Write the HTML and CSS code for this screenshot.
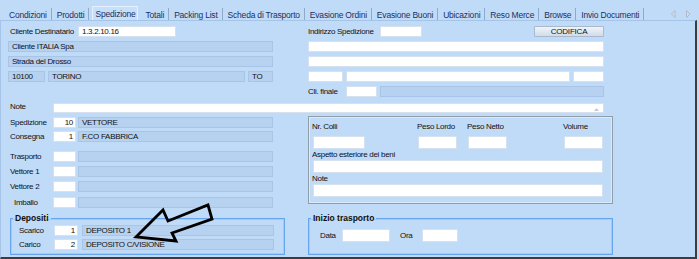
FILE: index.html
```html
<!DOCTYPE html>
<html>
<head>
    <title>Spedizione</title>
    <link rel="stylesheet" href="styles.css">
</head>
<body>
    <div class="window">
        <div class="tabbar">
            <span class="tab">Condizioni</span>
            <span class="tab">Prodotti</span>
            <span class="tab active">Spedizione</span>
            <span class="tab">Totali</span>
            <span class="tab">Packing List</span>
            <span class="tab">Scheda di Trasporto</span>
            <span class="tab">Evasione Ordini</span>
            <span class="tab">Evasione Buoni</span>
            <span class="tab">Ubicazioni</span>
            <span class="tab">Reso Merce</span>
            <span class="tab">Browse</span>
            <span class="tab">Invio Documenti</span>
            <span class="tab-scroll">
                <svg width="20" height="8" viewBox="0 0 20 8">
                    <path d="M4 0.5 L0.5 4 L4 7.5 Z" fill="#d3dde9" stroke="#aebbcc"/>
                    <path d="M15.5 0.5 L19 4 L15.5 7.5 Z" fill="#d3dde9" stroke="#aebbcc"/>
                </svg>
            </span>
        </div>

        <div class="pane">
            <!-- intestazione destinatario / indirizzo -->
            <div class="section top">
                <div class="col left">
                    <div class="row">
                        <label class="lbl lbl-dest">Cliente Destinatario</label>
                        <div class="box in w98">1.3.2.10.16</div>
                    </div>
                    <div class="row gap4">
                        <div class="box ro full">Cliente ITALIA Spa</div>
                    </div>
                    <div class="row gap4">
                        <div class="box ro full">Strada del Drosso</div>
                    </div>
                    <div class="row gap4">
                        <div class="box ro w37">10100</div>
                        <div class="box ro w197 sp3">TORINO</div>
                        <div class="box ro w25 sp3">TO</div>
                    </div>
                </div>
                <div class="col right">
                    <div class="row">
                        <label class="lbl lbl-ind">Indirizzo Spedizione</label>
                        <div class="box in w42"></div>
                        <button class="btn" type="button">CODIFICA</button>
                    </div>
                    <div class="row gap4">
                        <div class="box in full"></div>
                    </div>
                    <div class="row gap4">
                        <div class="box in full"></div>
                    </div>
                    <div class="row gap4">
                        <div class="box in w35"></div>
                        <div class="box in w224 sp3"></div>
                        <div class="box in w31 sp3"></div>
                    </div>
                    <div class="row gap4">
                        <label class="lbl lbl-cli">Cli. finale</label>
                        <div class="box in w31"></div>
                        <div class="box ro w224 sp3"></div>
                    </div>
                </div>
            </div>

            <div class="row note-row">
                <label class="lbl lbl-note">Note</label>
                <div class="box in memo">
                    <svg class="memo-arrow" width="5" height="3" viewBox="0 0 5 3"><path d="M0 3 L2.5 0 L5 3 Z" fill="#c4c9cf"/></svg>
                </div>
            </div>

            <!-- vettori e colli -->
            <div class="section middle">
                <div class="col left">
                    <div class="row">
                        <label class="lbl lbl-side">Spedizione</label>
                        <div class="box in code num">10</div>
                        <div class="box ro desc">VETTORE</div>
                    </div>
                    <div class="row gap3">
                        <label class="lbl lbl-side">Consegna</label>
                        <div class="box in code num">1</div>
                        <div class="box ro desc">F.CO FABBRICA</div>
                    </div>
                    <div class="row gap9">
                        <label class="lbl lbl-side">Trasporto</label>
                        <div class="box in code"></div>
                        <div class="box ro desc"></div>
                    </div>
                    <div class="row gap4">
                        <label class="lbl lbl-side">Vettore 1</label>
                        <div class="box in code"></div>
                        <div class="box ro desc"></div>
                    </div>
                    <div class="row gap4">
                        <label class="lbl lbl-side">Vettore 2</label>
                        <div class="box in code"></div>
                        <div class="box ro desc"></div>
                    </div>
                    <div class="row gap5">
                        <label class="lbl lbl-side lbl-imb">Imballo</label>
                        <div class="box in code"></div>
                        <div class="box ro desc"></div>
                    </div>
                </div>
                <div class="col right">
                    <div class="colli">
                        <div class="colli-grid">
                            <span>Nr. Colli</span>
                            <span>Peso Lordo</span>
                            <span>Peso Netto</span>
                            <span>Volume</span>
                            <div class="box in tall w52"></div>
                            <div class="box in tall w39"></div>
                            <div class="box in tall w39"></div>
                            <div class="box in tall w39"></div>
                        </div>
                        <div class="colli-lbl">Aspetto esteriore dei beni</div>
                        <div class="box in tall wide"></div>
                        <div class="colli-lbl">Note</div>
                        <div class="box in tall wide"></div>
                    </div>
                </div>
            </div>

            <!-- depositi / inizio trasporto -->
            <div class="section groups">
                <fieldset class="group depositi">
                    <legend>Depositi</legend>
                    <div class="row">
                        <label class="lbl lbl-dep">Scarico</label>
                        <div class="box in dep-code num">1</div>
                        <div class="box ro dep-desc">DEPOSITO 1</div>
                    </div>
                    <div class="row gap3">
                        <label class="lbl lbl-dep">Carico</label>
                        <div class="box in dep-code num">2</div>
                        <div class="box ro dep-desc">DEPOSITO C/VISIONE</div>
                    </div>
                </fieldset>
                <fieldset class="group inizio">
                    <legend>Inizio trasporto</legend>
                    <div class="row">
                        <label class="lbl lbl-data">Data</label>
                        <div class="box in tall w48"></div>
                        <label class="lbl lbl-ora">Ora</label>
                        <div class="box in tall w36"></div>
                    </div>
                </fieldset>
            </div>
        </div>

        <svg class="pointer" width="699" height="259" viewBox="0 0 699 259">
            <path d="M136 237 L163 210 L168 221 L208 205 L212 219 L172 233 L176 241 Z"
                  fill="none" stroke="#000" stroke-width="2.8" stroke-linejoin="miter"/>
        </svg>
    </div>
</body>
</html>
```

FILE: styles.css
```css
body {
    margin: 0;
    background-color: #c0dbf8;
    font-family: "Liberation Sans", Arial, sans-serif;
    font-size: 8px;
    letter-spacing: -0.3px;
    color: #111;
}
.window {
    position: relative;
    width: 699px;
    height: 259px;
    overflow: hidden;
}

/* tab strip */
.tabbar {
    display: flex;
    align-items: flex-end;
    height: 20px;
    padding-left: 4px;
    box-sizing: border-box;
    font-size: 8.5px;
    letter-spacing: -0.2px;
    color: #1d2f5e;
}
.tab {
    height: 12px;
    line-height: 14px;
    padding: 0 4px 0 5px;
    border-right: 1px solid #8fa9cb;
    white-space: nowrap;
}
.tab.active {
    height: 13px;
    line-height: 15px;
    padding: 0 2px;
    background-color: #c6dffa;
    border: 1px solid #e6f1fd;
    border-bottom: none;
    margin-left: 3px;
    margin-right: 2px;
}
.tab-scroll {
    margin-left: auto;
    margin-right: 8px;
    align-self: flex-start;
    height: 8px;
    margin-top: 10px;
}
.tab-scroll svg {
    display: block;
}

/* pane */
.pane {
    width: 697px;
    height: 239px;
    box-sizing: border-box;
    border-top: 1px solid #a6c4e8;
    border-left: 1px solid #a6c4e8;
    border-right: 2px solid #3d3d3d;
    border-bottom: 2px solid #3d3d3d;
    padding: 5px 0 0 7px;
}
.section {
    display: flex;
    align-items: flex-start;
}
.col.left {
    width: 265px;
}
.col.right {
    width: 296px;
    margin-left: 35px;
}
.row {
    display: flex;
    align-items: center;
}
.gap3 { margin-top: 3px; }
.gap4 { margin-top: 4px; }
.gap5 { margin-top: 5px; }
.gap9 { margin-top: 9px; }
.sp3 { margin-left: 3px; }

.lbl {
    display: inline-block;
    white-space: nowrap;
}
.lbl-dest { width: 68px; margin-left: 2px; }
.lbl-ind { width: 72px; }
.lbl-cli { width: 38px; }
.lbl-note { width: 43px; margin-left: 2px; margin-top: -3px; }
.lbl-side { width: 43px; margin-left: 2px; }
.lbl-imb { width: 39px; margin-left: 6px; }
.lbl-dep { width: 35px; margin-left: 8px; }
.lbl-data { width: 22px; margin-left: 11px; }
.lbl-ora { width: 22px; margin-left: 10px; }

/* fields */
.box {
    height: 11px;
    box-sizing: border-box;
    border: 1px solid;
    line-height: 9px;
    padding: 0 3px;
    white-space: nowrap;
    overflow: hidden;
}
.box.tall {
    height: 13px;
}
.in {
    background-color: #fff;
    border-color: #d5e1ee;
}
.ro {
    background-color: #b7d2f1;
    border-color: #a8c5e7;
}
.num {
    text-align: right;
    padding-right: 2px;
}
.full { width: 100%; }
.w25 { width: 25px; }
.w31 { width: 31px; }
.w35 { width: 35px; }
.w36 { width: 36px; }
.w37 { width: 37px; }
.w39 { width: 39px; }
.w42 { width: 42px; }
.w48 { width: 48px; }
.w52 { width: 52px; }
.w98 { width: 98px; }
.w197 { width: 197px; }
.w224 { width: 224px; }

.btn {
    width: 70px;
    height: 11px;
    margin-left: auto;
    padding: 0;
    background: linear-gradient(#f0f4f9, #d0dcea);
    border: 1px solid #aab9cc;
    border-radius: 1px;
    font-family: "Liberation Sans", Arial, sans-serif;
    font-size: 8px;
    letter-spacing: -0.2px;
    line-height: 9px;
    color: #111;
}

.note-row {
    margin-top: 6px;
}
.memo {
    width: 551px;
    height: 10px;
    position: relative;
}
.memo-arrow {
    position: absolute;
    right: 4px;
    top: 4px;
}

/* middle */
.middle {
    margin-top: 3px;
}
.middle .col.left {
    padding-top: 1px;
}
.code {
    width: 23px;
}
.desc {
    width: 195px;
    margin-left: 2px;
}
.middle .col.right {
    width: 305px;
}
.colli {
    height: 88px;
    box-sizing: border-box;
    border: 1px solid #929daa;
    box-shadow: inset 0 0 0 1px #dce9f7;
    padding: 5px 0 0 4px;
}
.colli-grid {
    display: grid;
    grid-template-columns: 105px 50px 96px 39px;
    row-gap: 4px;
}
.colli-grid span {
    height: 10px;
    line-height: 10px;
    margin-left: -1px;
}
.colli-lbl {
    height: 8px;
    line-height: 8px;
    margin-top: 2px;
    margin-bottom: 1px;
    margin-left: -1px;
}
.wide {
    width: 290px;
}

/* group boxes */
.groups {
    margin-top: 5px;
}
.group {
    margin: 0;
    height: 42px;
    box-sizing: border-box;
    border: 1px solid #67a6ef;
    box-shadow: inset 0 0 0 1px #a4cbf6;
    padding: 0;
}
.group legend {
    font-size: 8.5px;
    font-weight: bold;
    letter-spacing: 0;
    padding: 0 2px;
    margin-left: 2px;
    line-height: 10px;
}
.depositi {
    width: 275px;
    margin-left: 2px;
}
.depositi .row:first-of-type {
    margin-top: 2px;
}
.dep-code {
    width: 24px;
}
.dep-desc {
    width: 192px;
    margin-left: 4px;
}
.inizio {
    width: 305px;
    margin-left: 23px;
}
.inizio .row {
    margin-top: 6px;
}

.pointer {
    position: absolute;
    left: 0;
    top: 0;
    pointer-events: none;
}
```
